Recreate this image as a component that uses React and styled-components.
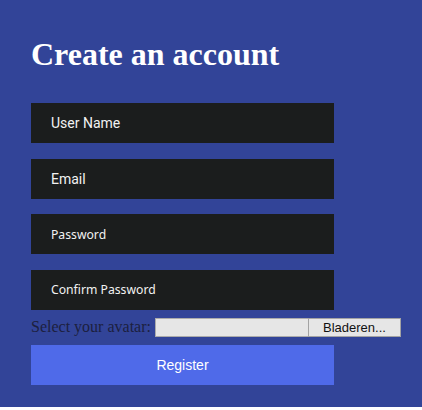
import React from "react";
import styled, { createGlobalStyle } from "styled-components";

const Global = createGlobalStyle`
  html, body { margin: 0; padding: 0; background: #ffffff; }
`;

const Page = styled.div`
  background: #324498;
  height: 407px;
  box-sizing: border-box;
  padding: 32px 31px 0;
  overflow: hidden;
`;

const Title = styled.h1`
  margin: 0 0 27px;
  font-family: "Liberation Serif", "Times New Roman", serif;
  font-weight: bold;
  font-size: 32px;
  line-height: 44px;
  color: #ffffff;
  white-space: nowrap;
`;

const Form = styled.form`
  display: flex;
  flex-direction: column;
  align-items: flex-start;
`;

const Field = styled.input`
  box-sizing: border-box;
  width: 303px;
  height: 40px;
  margin: 0 0 ${(p) => p.$gap ?? 15.67}px;
  padding: 0 20px;
  border: none;
  outline: none;
  background: #1b1d1d;
  color: #ffffff;
  font-family: ${(p) => (p.type === "password" ? '"Noto Sans", "Open Sans", sans-serif' : 'Roboto, "Liberation Sans", sans-serif')};
  font-size: ${(p) => (p.type === "password" ? "12.2px" : "14px")};
  &::placeholder { color: #f2f2f2; opacity: 1; }
`;

const AvatarRow = styled.div`
  display: flex;
  align-items: center;
  height: 19px;
  margin: 8px 0 8px;
  white-space: nowrap;
`;

const AvatarLabel = styled.span`
  flex-shrink: 0;
  font-family: "Liberation Serif", "Times New Roman", serif;
  font-size: 16px;
  color: #1c1f3e;
  margin-right: 4px;
`;

const FileBox = styled.label`
  flex-shrink: 0;
  display: flex;
  height: 19px;
`;

const FileName = styled.span`
  box-sizing: border-box;
  width: 153px;
  height: 19px;
  background: #e6e6e6;
  border: 1px solid #ababab;
  border-right: none;
`;

const FileButton = styled.span`
  box-sizing: border-box;
  width: 93px;
  height: 19px;
  display: flex;
  align-items: center;
  justify-content: center;
  background: #e6e6e6;
  border: 1px solid #a3a3a3;
  font-family: "Liberation Sans", Arial, sans-serif;
  font-size: 13px;
  color: #111111;
`;

const Submit = styled.button`
  width: 303px;
  height: 40px;
  border: none;
  background: #4f6ae9;
  color: #ffffff;
  font-family: "Liberation Sans", Arial, sans-serif;
  font-size: 14px;
  cursor: pointer;
`;

export default function App() {
  return (
    <>
      <Global />
      <Page>
        <Title>Create an account</Title>
        <Form onSubmit={(e) => e.preventDefault()}>
          <Field type="text" placeholder="User Name" />
          <Field type="email" placeholder="Email" />
          <Field type="password" placeholder="Password" />
          <Field type="password" placeholder="Confirm Password" $gap={0} />
          <AvatarRow>
            <AvatarLabel>Select your avatar:</AvatarLabel>
            <FileBox>
              <FileName />
              <FileButton>Bladeren...</FileButton>
            </FileBox>
          </AvatarRow>
          <Submit type="submit">Register</Submit>
        </Form>
      </Page>
    </>
  );
}
